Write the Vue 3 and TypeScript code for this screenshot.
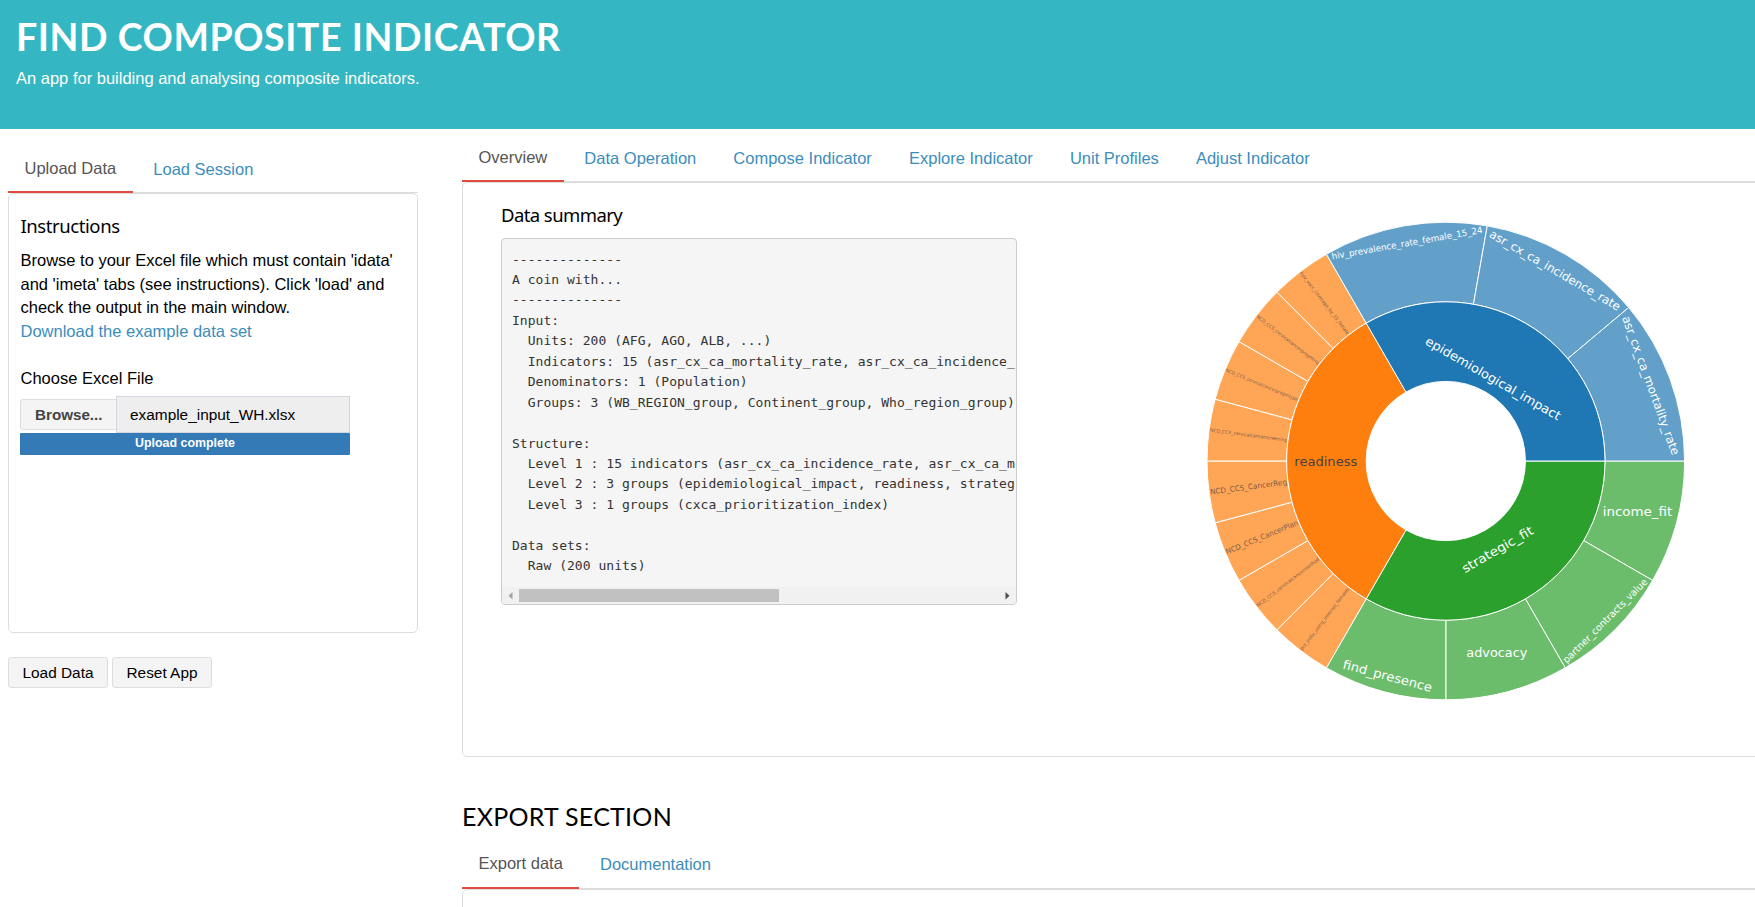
<script setup lang="ts">
interface Slice { from: number; to: number; inner: number; color: string; leaf: boolean }
interface Label { text: string; x: number; y: number; angle: number; length: number; size: number; tone?: string }

const sideTabs = ['Upload Data', 'Load Session']
const mainTabs = ['Overview', 'Data Operation', 'Compose Indicator', 'Explore Indicator', 'Unit Profiles', 'Adjust Indicator']
const exportTabs = ['Export data', 'Documentation']

const summary = `--------------
A coin with...
--------------
Input:
  Units: 200 (AFG, AGO, ALB, ...)
  Indicators: 15 (asr_cx_ca_mortality_rate, asr_cx_ca_incidence_
  Denominators: 1 (Population)
  Groups: 3 (WB_REGION_group, Continent_group, Who_region_group)

Structure:
  Level 1 : 15 indicators (asr_cx_ca_incidence_rate, asr_cx_ca_m
  Level 2 : 3 groups (epidemiological_impact, readiness, strateg
  Level 3 : 1 groups (cxca_prioritization_index)

Data sets:
  Raw (200 units)`

const RING = 79.6
const groups = [
  { color: '#2ca02c', start: 0, leaves: 4 },
  { color: '#ff7f0e', start: 120, leaves: 8 },
  { color: '#1f77b4', start: 240, leaves: 3 },
]

const slices: Slice[] = groups.flatMap((g) => {
  const step = 120 / g.leaves
  const leaves: Slice[] = Array.from({ length: g.leaves }, (_, i) => ({
    from: g.start + i * step, to: g.start + (i + 1) * step, inner: RING * 2, color: g.color, leaf: true,
  }))
  return [...leaves, { from: g.start, to: g.start + 120, inner: RING, color: g.color, leaf: false }]
})

function point(radius: number, deg: number): string {
  const a = (deg * Math.PI) / 180
  return `${(radius * Math.cos(a)).toFixed(2)} ${(radius * Math.sin(a)).toFixed(2)}`
}

function sector(s: Slice): string {
  const outer = s.inner + RING
  return `M${point(s.inner, s.from)}L${point(outer, s.from)}A${outer} ${outer} 0 0 1 ${point(outer, s.to)}` +
    `L${point(s.inner, s.to)}A${s.inner} ${s.inner} 0 0 0 ${point(s.inner, s.from)}Z`
}

const readinessLeaves: [string, number][] = [
  ['pct_indiv_using_internet_females', 4.7],
  ['NCD_CCS_cervicalcancermethod', 4.9],
  ['NCD_CCS_CancerPlan', 7.4],
  ['NCD_CCS_CancerReg', 7.5],
  ['NCD_CCX_cervicalcancerscreening', 4.7],
  ['NCD_CCS_cervicalcancerprogmtype', 4.6],
  ['NCD_CCS_cervicalcancerprogmtng', 4.8],
  ['hpv_vacc_coverage_by_15_female', 4.8],
]

const labels: Label[] = [
  { text: 'epidemiological_impact', x: 47.3, y: -82.5, angle: 30, length: 154, size: 12.5 },
  { text: 'readiness', x: -120, y: 0.5, angle: 0, length: 63, size: 12.5, tone: 'dark' },
  { text: 'strategic_fit', x: 51.7, y: 88.5, angle: -30, length: 80, size: 12.5 },
  { text: 'income_fit', x: 191.7, y: 51.2, angle: 0, length: 69.5, size: 12.5 },
  { text: 'partner_contracts_value', x: 159.3, y: 159.8, angle: -45, length: 115, size: 9.8 },
  { text: 'advocacy', x: 51, y: 192, angle: 0, length: 61, size: 12.5 },
  { text: 'find_presence', x: -58.3, y: 215, angle: 15, length: 92, size: 12.5 },
  { text: 'asr_cx_ca_mortality_rate', x: 205, y: -75.5, angle: 70, length: 147, size: 11.8 },
  { text: 'asr_cx_ca_incidence_rate', x: 109.3, y: -190.7, angle: 30, length: 149, size: 11.8 },
  { text: 'hiv_prevalence_rate_female_15_24', x: -38.8, y: -217.8, angle: -10, length: 153, size: 8.9 },
  ...readinessLeaves.map(([text, size], i): Label => {
    const deg = 127.5 + i * 15
    const a = (deg * Math.PI) / 180
    return { text, x: 199 * Math.cos(a), y: 199 * Math.sin(a), angle: deg - 180, length: 77.5, size, tone: 'faded' }
  }),
]
</script>

<template>
  <div class="page">
    <header class="banner">
      <h1>FIND COMPOSITE INDICATOR</h1>
      <p>An app for building and analysing composite indicators.</p>
    </header>

    <div class="columns">
      <aside class="side">
        <nav class="tabs">
          <a v-for="(t, i) in sideTabs" :key="t" :class="{ active: i === 0 }">{{ t }}</a>
        </nav>
        <section class="card side-card">
          <h4>Instructions</h4>
          <p class="help">
            Browse to your Excel file which must contain 'idata'<br />
            and 'imeta' tabs (see instructions). Click 'load' and<br />
            check the output in the main window.<br />
            <a class="link">Download the example data set</a>
          </p>
          <label class="file-label">Choose Excel File</label>
          <div class="file-row">
            <span class="browse">Browse...</span>
            <span class="file-name">example_input_WH.xlsx</span>
          </div>
          <div class="progress">Upload complete</div>
        </section>
        <div class="actions">
          <button type="button">Load Data</button>
          <button type="button">Reset App</button>
        </div>
      </aside>

      <main class="main">
        <nav class="tabs">
          <a v-for="(t, i) in mainTabs" :key="t" :class="{ active: i === 0 }">{{ t }}</a>
        </nav>
        <section class="card main-card">
          <div class="summary">
            <h4 class="narrow">Data summary</h4>
            <div class="output">
              <pre>{{ summary }}</pre>
              <div class="scrollbar">
                <svg width="17" height="17" viewBox="0 0 17 17"><path d="M10.500 5v7.400L6.500 8.700z" fill="#a3a3a3" /></svg>
                <div class="track"><div class="thumb"></div></div>
                <svg width="17" height="17" viewBox="0 0 17 17"><path d="M6.500 5v7.400l4-3.700z" fill="#505050" /></svg>
              </div>
            </div>
          </div>
          <svg class="sunburst" width="482" height="482" viewBox="0 0 482 482">
            <g transform="translate(240.800 241)">
              <path
                v-for="(s, i) in slices" :key="i" :d="sector(s)" :fill="s.color"
                :fill-opacity="s.leaf ? 0.7 : 1" stroke="#fff" stroke-width="1"
              />
              <text
                v-for="l in labels" :key="l.text" :class="l.tone"
                :transform="`translate(${l.x.toFixed(2)} ${l.y.toFixed(2)}) rotate(${l.angle})`"
                :y="l.size * 0.34" :font-size="l.size" :textLength="l.length"
                lengthAdjust="spacingAndGlyphs"
              >{{ l.text }}</text>
            </g>
          </svg>
        </section>

        <h2>EXPORT SECTION</h2>
        <nav class="tabs">
          <a v-for="(t, i) in exportTabs" :key="t" :class="{ active: i === 0 }">{{ t }}</a>
        </nav>
        <section class="card export-card"></section>
      </main>
    </div>
  </div>
</template>

<style>
body { margin: 0; background: #fff; }
</style>

<style scoped>
.page {
  width: 1755px;
  height: 907px;
  overflow: hidden;
  background: #fff;
  color: #000;
  font: 16.5px/23.57px "Liberation Sans", Arial, sans-serif;
}
* { box-sizing: border-box; }
h1, h2, h4, p, pre { margin: 0; font-weight: 400; }

.banner { height: 129px; padding: 14px 16px 0; background: #34b7c2; color: #fff; }
.banner h1 { font: 700 37.500px/45px Lato, sans-serif; letter-spacing: 0.57px; white-space: nowrap; }
.banner p { margin-top: 8px; }

.columns { display: flex; align-items: flex-start; padding-left: 8px; }
.side { flex: 0 0 410px; margin-right: 44px; padding-top: 16px; }
.main { flex: 0 0 1320px; padding-top: 5px; }

.tabs { display: flex; height: 48px; align-items: flex-end; border-bottom: 1px solid #ddd; }
.tabs a {
  flex: none;
  margin: 0 4.1px -1px 0;
  padding: 0 16.500px 11px;
  color: #3c8dbc;
  white-space: nowrap;
}
.tabs a.active { padding-bottom: 10px; border-bottom: 2px solid #e14a3f; color: #555; }
.main > .tabs:first-child a { padding-bottom: 11.4px; }
.main > .tabs:first-child a.active { padding-bottom: 10.4px; }

.card { border: 1px solid #ddd; border-radius: 5px; }
.side-card { height: 440px; padding: 20px 0 0 11.500px; }
h4 { font: 400 18.500px/24px "Noto Sans", sans-serif; letter-spacing: -0.42px; white-space: nowrap; }
h4.narrow { letter-spacing: -0.58px; }
.help { margin-top: 11px; white-space: nowrap; }
.link { color: #3c8dbc; }
.file-label { display: block; margin-top: 23.700px; }
.file-row { display: flex; align-items: center; margin: 5.300px 0 0 -0.500px; width: 330px; height: 37px; }
.browse {
  width: 97px; height: 31px; margin-right: -1px; padding-left: 14px;
  border: 1px solid #ddd; border-radius: 3px 0 0 3px; background: #f4f4f4;
  color: #444; font-size: 15.200px; font-weight: 700; line-height: 30px;
}
.file-name {
  width: 234px; height: 37px; padding-left: 13px; border: 1px solid #d2d6de;
  background: #eee; font-size: 15.400px; line-height: 36px;
}
.progress {
  width: 330px; height: 22px; margin-left: -0.500px; border-radius: 1px; background: #337ab7; color: #fff;
  font-size: 12.400px; font-weight: 700; line-height: 21.500px; text-align: center;
}
.actions { display: flex; gap: 4px; margin-top: 24px; }
.actions button {
  width: 100px; height: 31px; padding: 0; border: 1px solid #ddd; border-radius: 3px;
  background: #f4f4f4; color: #000; font: 15.400px/29px "Liberation Sans", Arial, sans-serif;
}

.main-card { display: flex; align-items: flex-start; height: 575px; padding: 20px 0 0 38px; }
.summary { width: 516px; }
.output {
  height: 367px; margin-top: 11px; padding-top: 10.600px; overflow: hidden;
  border: 1px solid #ccc; border-radius: 4px; background: #f5f5f5;
}
pre {
  height: 337.400px; padding-left: 10px; color: #333;
  font: 13px/20.430px "DejaVu Sans Mono", monospace; letter-spacing: 0.03px;
}
.scrollbar { display: flex; height: 17px; background: #f1f1f1; }
.track { flex: 1; padding-top: 2px; }
.thumb { width: 260px; height: 13px; background: #c1c1c1; }

.sunburst { display: block; margin: 17px 0 0 188px; }
.sunburst text { fill: #fff; font-family: "DejaVu Sans", sans-serif; text-anchor: middle; }
.sunburst text.dark { fill: #444; }
.sunburst text.faded { fill: #444; fill-opacity: 0.75; }

h2 { margin-top: 43px; font: 400 25px/32px Lato, sans-serif; letter-spacing: 0.26px; white-space: nowrap; }
h2 + .tabs { margin-top: 9px; }
h2 + .tabs a { padding-bottom: 12px; }
h2 + .tabs a.active { padding-bottom: 11px; }
.export-card { height: 120px; }
</style>
